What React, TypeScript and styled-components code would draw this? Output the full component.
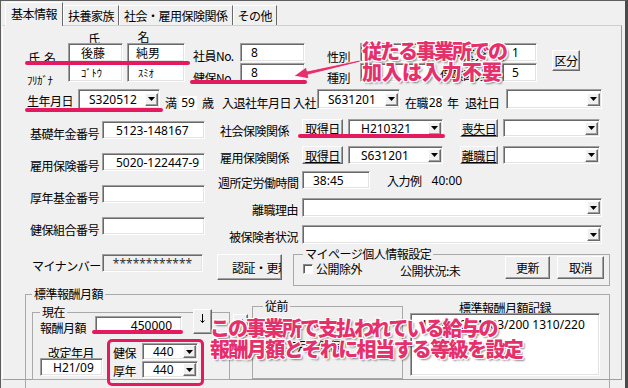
import React from "react";
import styled, { createGlobalStyle } from "styled-components";

const JP = `"Noto Sans CJK JP", "Noto Sans", sans-serif`;
const NUM = `"Noto Sans", "Noto Sans CJK JP", sans-serif`;
const PINK = "#e6306c";
const MARK = "#e31a5e";

const GlobalStyle = createGlobalStyle`
  body { margin: 0; background: #f0f0f0; }
  * { box-sizing: border-box; }
`;

const Window = styled.div`
  position: relative;
  width: 628px;
  height: 388px;
  overflow: hidden;
  background: #f0f0f0;
  border-top: 1px solid #5e5e5e;
  border-left: 1px solid #5e5e5e;
  border-right: 3px solid #4a4a4a;
  font-family: ${JP};
  font-size: 12px;
  color: #000;
`;

const TabStrip = styled.div`
  display: flex;
  align-items: flex-end;
  height: 24px;
  padding-left: 4px;
`;

const Tab = styled.div<{ $active?: boolean }>`
  position: relative;
  z-index: ${(p) => (p.$active ? 1 : 0)};
  display: flex;
  align-items: center;
  height: ${(p) => (p.$active ? 24 : 20)}px;
  margin-bottom: ${(p) => (p.$active ? -1 : 0)}px;
  padding: 0 ${(p) => (p.$active ? 5 : 4)}px ${(p) => (p.$active ? 3 : 0)}px;
  background: #f0f0f0;
  border-top: 1px solid #fff;
  border-left: 1px solid #fff;
  border-right: 1px solid #6a6a6a;
  letter-spacing: -0.5px;
  white-space: nowrap;
`;

const Panel = styled.div`
  margin-left: 1px;
  width: 620px;
  height: 355px;
  border: 1px solid;
  border-color: #cfcfcf #9d9d9d #9d9d9d #fff;
`;

/* ---------- generic form parts ---------- */

const FormRow = styled.div<{ $h: number; $mt?: number }>`
  display: flex;
  align-items: flex-start;
  flex-shrink: 0;
  height: ${(p) => p.$h}px;
  margin-top: ${(p) => p.$mt ?? 0}px;
`;

const Label = styled.span<{
  $w?: number;
  $ml?: number;
  $mt?: number;
  $pl?: number;
  $pr?: number;
  $align?: "left" | "right" | "center";
  $fs?: number;
  $num?: boolean;
}>`
  display: block;
  flex-shrink: 0;
  width: ${(p) => (p.$w ? `${p.$w}px` : "auto")};
  margin-left: ${(p) => p.$ml ?? 0}px;
  margin-top: ${(p) => p.$mt ?? 0}px;
  padding-left: ${(p) => p.$pl ?? 0}px;
  padding-right: ${(p) => p.$pr ?? 0}px;
  text-align: ${(p) => p.$align ?? "left"};
  font-family: ${(p) => (p.$num ? NUM : JP)};
  font-size: ${(p) => p.$fs ?? 12}px;
  line-height: 14px;
  letter-spacing: ${(p) => (p.$num ? 0 : -0.5)}px;
  white-space: nowrap;
`;

const Box = styled.div<{
  $w: number;
  $h?: number;
  $ml?: number;
  $mt?: number;
  $pl?: number;
  $pr?: number;
  $justify?: string;
  $gray?: boolean;
  $small?: boolean;
}>`
  flex-shrink: 0;
  display: flex;
  align-items: center;
  justify-content: ${(p) => p.$justify ?? "flex-start"};
  width: ${(p) => p.$w}px;
  height: ${(p) => p.$h ?? 19}px;
  margin-left: ${(p) => p.$ml ?? 0}px;
  margin-top: ${(p) => p.$mt ?? 0}px;
  padding-left: ${(p) => p.$pl ?? 10}px;
  padding-right: ${(p) => p.$pr ?? 0}px;
  background: ${(p) => (p.$gray ? "#f0f0f0" : "#fff")};
  border: 1px solid;
  border-color: #a0a0a0 #fff #fff #a0a0a0;
  box-shadow: inset 1px 1px 0 #696969, inset -1px -1px 0 #e3e3e3;
  font-family: ${NUM};
  font-size: ${(p) => (p.$small ? 10.5 : 12)}px;
  color: ${(p) => (p.$gray ? "#333" : "#000")};
  white-space: nowrap;
  overflow: hidden;
`;

const ComboText = styled.span`
  flex: 1;
`;

const DropBtn = styled.span`
  flex-shrink: 0;
  display: flex;
  align-items: center;
  justify-content: center;
  width: 13px;
  height: 13px;
  margin-right: 1px;
  background: #f0f0f0;
  border: 1px solid;
  border-color: #fff #696969 #696969 #fff;
  box-shadow: inset -1px -1px 0 #a0a0a0;
`;

type ComboProps = { w: number; h?: number; ml?: number; mt?: number; pl?: number; value?: string };

function Combo({ w, h, ml, mt, pl, value }: ComboProps) {
  return (
    <Box $w={w} $h={h} $ml={ml} $mt={mt} $pl={pl}>
      <ComboText>{value}</ComboText>
      <DropBtn>
        <svg width="7" height="4" viewBox="0 0 7 4">
          <polygon points="0,0 7,0 3.5,4" fill="#000" />
        </svg>
      </DropBtn>
    </Box>
  );
}

const Tag = styled.span<{ $w: number; $mt?: number }>`
  flex-shrink: 0;
  width: ${(p) => p.$w}px;
  height: 14px;
  margin-top: ${(p) => p.$mt ?? 0}px;
  background: #fff;
  font-family: ${NUM};
  font-size: 12px;
  line-height: 14px;
  text-align: center;
`;

const Button = styled.button<{
  $w: number;
  $h: number;
  $ml?: number;
  $mt?: number;
  $pl?: number;
  $link?: boolean;
  $top?: boolean;
}>`
  flex-shrink: 0;
  display: flex;
  align-items: ${(p) => (p.$top ? "flex-start" : "center")};
  justify-content: ${(p) => (p.$pl ? "flex-start" : "center")};
  width: ${(p) => p.$w}px;
  height: ${(p) => p.$h}px;
  margin: ${(p) => p.$mt ?? 0}px 0 0 ${(p) => p.$ml ?? 0}px;
  padding: ${(p) => (p.$top ? 4 : 0)}px 0 0 ${(p) => p.$pl ?? 0}px;
  background: #f0f0f0;
  border: 1px solid;
  border-color: #fff #696969 #696969 #fff;
  box-shadow: inset -1px -1px 0 #a0a0a0;
  font-family: ${JP};
  font-size: 12px;
  letter-spacing: -0.5px;
  color: #000;
  text-decoration: ${(p) => (p.$link ? "underline" : "none")};
  white-space: nowrap;
  overflow: hidden;
`;

const Check = styled.span`
  flex-shrink: 0;
  width: 10px;
  height: 10px;
  margin-top: 8px;
  background: #fff;
  border: 1px solid;
  border-color: #8a8a8a #fff #fff #8a8a8a;
  box-shadow: inset 1px 1px 0 #5a5a5a;
`;

const Group = styled.fieldset<{ $w: number; $h: number; $ml?: number; $mt?: number; $pl?: number }>`
  flex-shrink: 0;
  min-width: 0;
  width: ${(p) => p.$w}px;
  height: ${(p) => p.$h}px;
  margin: ${(p) => p.$mt ?? 0}px 0 0 ${(p) => p.$ml ?? 0}px;
  padding: 0 0 0 ${(p) => p.$pl ?? 0}px;
  border: 1px solid #a9a9a9;
`;

const Legend = styled.legend`
  margin: 0;
  padding: 0 2px;
  font-size: 12px;
  line-height: 14px;
  letter-spacing: -0.5px;
`;

/* ---------- sections ---------- */

const TopBlock = styled.div`
  display: flex;
  align-items: flex-start;
  margin-top: 5px;
  padding-left: 24px;
`;

const NameRows = styled.div`
  display: flex;
  flex-direction: column;
  row-gap: 1px;
`;

const Section = styled.div<{ $mt: number; $pl?: number }>`
  display: flex;
  align-items: flex-start;
  margin-top: ${(p) => p.$mt}px;
  padding-left: ${(p) => p.$pl ?? 24}px;
`;

const Column = styled.div<{ $w: number; $gap?: number; $pt?: number; $ml?: number }>`
  display: flex;
  flex-direction: column;
  flex-shrink: 0;
  width: ${(p) => p.$w}px;
  row-gap: ${(p) => p.$gap ?? 0}px;
  padding-top: ${(p) => p.$pt ?? 0}px;
  margin-left: ${(p) => p.$ml ?? 0}px;
`;

const RecordBox = styled.div`
  width: 190px;
  height: 63px;
  margin-top: -2px;
  padding: 4px 0 0 10px;
  background: #fff;
  border: 1px solid;
  border-color: #a0a0a0 #fff #fff #a0a0a0;
  box-shadow: inset 1px 1px 0 #696969, inset -1px -1px 0 #e3e3e3;
  font-family: ${NUM};
  font-size: 12px;
  line-height: 14px;
  white-space: nowrap;
`;

/* ---------- annotations (drawn over the form) ---------- */

const Underline = styled.div<{ $x: number; $y: number; $w: number }>`
  position: absolute;
  left: ${(p) => p.$x - 1}px;
  top: ${(p) => p.$y - 1}px;
  width: ${(p) => p.$w}px;
  height: 4px;
  border-radius: 2px;
  background: ${MARK};
`;

const Frame = styled.div`
  position: absolute;
  left: 106px;
  top: 338px;
  width: 97px;
  height: 47px;
  border: 3px solid ${MARK};
  border-radius: 5px;
`;

const Callout = styled.div<{ $x: number; $y: number }>`
  position: absolute;
  left: ${(p) => p.$x - 1}px;
  top: ${(p) => p.$y - 1}px;
  display: flex;
  flex-direction: column;
  font-family: ${JP};
  font-weight: 900;
  font-size: 20px;
  line-height: 21px;
  color: ${PINK};
  white-space: nowrap;
  text-shadow: -1px -1px 0 #fff, 1px -1px 0 #fff, -1px 1px 0 #fff, 1px 1px 0 #fff,
    0 -1px 0 #fff, 0 1px 0 #fff, -1px 0 0 #fff, 1px 0 0 #fff, 2px 2px 2px rgba(0, 0, 0, 0.45);
`;

const CalloutLine = styled.span<{ $ls: number }>`
  letter-spacing: ${(p) => p.$ls}px;
`;

const Arrow = styled.svg`
  position: absolute;
  left: 287px;
  top: 51px;
`;

type InsRowProps = { label: string; btn1: string; value: string; btn2: string; mt?: number };

function InsuranceRow({ label, btn1, value, btn2, mt }: InsRowProps) {
  return (
    <FormRow $h={18} $mt={mt}>
      <Label $w={84} $pl={2} $mt={5}>{label}</Label>
      <Button $w={41} $h={18} $link>{btn1}</Button>
      <Combo w={95} h={18} ml={5} pl={12} value={value} />
      <Button $w={38} $h={18} $ml={17} $link>{btn2}</Button>
      <Combo w={97} h={18} ml={5} />
    </FormRow>
  );
}

export default function App() {
  return (
    <>
      <GlobalStyle />
      <Window>
        <TabStrip>
          <Tab $active>基本情報</Tab>
          <Tab>扶養家族</Tab>
          <Tab>社会・雇用保険関係</Tab>
          <Tab>その他</Tab>
        </TabStrip>
        <Panel>
          <TopBlock>
            <NameRows>
              <FormRow $h={11}>
                <Label $ml={61} $mt={1}>氏</Label>
                <Label $ml={38} $mt={-1}>名</Label>
              </FormRow>
              <FormRow $h={19}>
                <Label $w={41} $pl={1} $mt={8}>氏{"\u00a0\u00a0"}名</Label>
                <Box $w={55} $pl={12}>後藤</Box>
                <Box $w={58} $ml={4} $pl={8}>純男</Box>
                <Label $w={47} $ml={8} $mt={6}>社員No.</Label>
                <Box $w={65}>8</Box>
                <Label $w={33} $ml={22} $mt={7}>性別</Label>
                <Box $w={70} />
                <Label $w={62} $ml={10} $mt={5}>加入区分</Label>
                <Box $w={35} $pl={9}>1</Box>
              </FormRow>
              <FormRow $h={19}>
                <Label $w={41} $mt={10} $fs={11}>ﾌﾘｶﾞﾅ</Label>
                <Box $w={55} $pl={12} $small>ｺﾞﾄｳ</Box>
                <Box $w={58} $ml={4} $pl={10} $small>ｽﾐｵ</Box>
                <Label $w={47} $ml={8} $mt={8}>健保No.</Label>
                <Box $w={65}>8</Box>
                <Label $w={33} $ml={22} $mt={8}>種別</Label>
                <Box $w={70} />
                <Label $w={62} $ml={10} $mt={5}>保険区分</Label>
                <Box $w={35} $pl={9}>5</Box>
              </FormRow>
            </NameRows>
            <Button $w={28} $h={21} $ml={15} $mt={19}>区分</Button>
          </TopBlock>

          <Section $mt={7}>
            <Label $w={51} $mt={5}>生年月日</Label>
            <Combo w={82} h={20} pl={10} value="S320512" />
            <Label $w={14} $ml={5} $mt={7}>満</Label>
            <Tag $w={18} $mt={7}>59</Tag>
            <Label $w={20} $ml={5} $mt={7}>歳</Label>
            <Label $w={71} $mt={7}>入退社年月日</Label>
            <Label $w={24} $mt={7}>入社</Label>
            <Combo w={83} h={20} pl={10} value="S631201" />
            <Label $w={23} $ml={5} $mt={7}>在職</Label>
            <Tag $w={15} $mt={7}>28</Tag>
            <Label $w={18} $ml={4} $mt={7}>年</Label>
            <Label $w={41} $mt={7}>退社日</Label>
            <Combo w={96} h={20} />
          </Section>

          <Section $mt={9}>
            <Column $w={191} $gap={14} $pt={2}>
              {[
                ["基礎年金番号", "5123-148167"],
                ["雇用保険番号", "5020-122447-9"],
                ["厚年基金番号", ""],
                ["健保組合番号", ""],
              ].map(([label, value]) => (
                <FormRow $h={18} key={label}>
                  <Label $w={75} $pl={3} $mt={6}>{label}</Label>
                  <Box $w={103} $h={18} $pl={13}>{value}</Box>
                </FormRow>
              ))}
            </Column>
            <Column $w={384}>
              <InsuranceRow label="社会保険関係" btn1="取得日" value="H210321" btn2="喪失日" />
              <InsuranceRow label="雇用保険関係" btn1="取得日" value="S631201" btn2="離職日" mt={9} />
              <FormRow $h={18} $mt={7}>
                <Label $w={84} $pr={4} $mt={5} $align="right">週所定労働時間</Label>
                <Box $w={68} $h={18}>38:45</Box>
                <Label $ml={17} $mt={3}>入力例</Label>
                <Label $ml={10} $mt={3} $num>40:00</Label>
              </FormRow>
              <FormRow $h={18} $mt={9}>
                <Label $w={84} $pr={4} $mt={5} $align="right">離職理由</Label>
                <Combo w={300} h={19} />
              </FormRow>
              <FormRow $h={18} $mt={9}>
                <Label $w={84} $pr={4} $mt={5} $align="right">被保険者状況</Label>
                <Combo w={300} h={19} />
              </FormRow>
            </Column>
          </Section>

          <Section $mt={4}>
            <Label $w={75} $pl={5} $mt={12}>マイナンバー</Label>
            <Box $w={101} $h={18} $mt={7} $pl={0} $justify="center" $gray>
              ************
            </Box>
            <Button $w={65} $h={26} $ml={14} $mt={7} $pl={14}>認証・更新</Button>
            <Group $w={317} $h={39} $ml={11} $pl={9}>
              <Legend>マイページ個人情報設定</Legend>
              <FormRow $h={23} $mt={-5}>
                <Check />
                <Label $w={84} $ml={3} $mt={6}>公開除外</Label>
                <Label $w={105} $mt={8}>公開状況:未</Label>
                <Button $w={45} $h={23}>更新</Button>
                <Button $w={47} $h={23} $ml={7}>取消</Button>
              </FormRow>
            </Group>
          </Section>

          <Section $mt={1} $pl={22}>
            <Group $w={585} $h={120} $pl={6}>
              <Legend>標準報酬月額</Legend>
              <FormRow $h={80}>
                <Group $w={198} $h={75} $mt={4} $pl={7}>
                  <Legend>現在</Legend>
                  <FormRow $h={25} $mt={-10}>
                    <Label $w={55} $mt={12}>報酬月額</Label>
                    <Box $w={87} $h={18} $mt={7} $pl={0} $pr={9} $justify="flex-end">450000</Box>
                    <Button $w={19} $h={25} $ml={11} $top>
                      <svg width="5" height="9" viewBox="0 0 5 9">
                        <path d="M2.5 0 V8.5 M0.5 6.5 L2.5 8.5 L4.5 6.5" stroke="#000" strokeWidth="1" fill="none" />
                      </svg>
                    </Button>
                  </FormRow>
                  <FormRow $h={36} $mt={9}>
                    <Column $w={68}>
                      <Label $pl={8} $mt={3}>改定年月</Label>
                      <Box $w={63} $h={18} $mt={-2} $pl={12}>H21/09</Box>
                    </Column>
                    <Column $w={85} $gap={1}>
                      <FormRow $h={17}>
                        <Label $w={29} $ml={5} $mt={3}>健保</Label>
                        <Combo w={56} h={17} pl={10} value="440" />
                      </FormRow>
                      <FormRow $h={17}>
                        <Label $w={29} $ml={5} $mt={3}>厚年</Label>
                        <Combo w={56} h={17} pl={10} value="440" />
                      </FormRow>
                    </Column>
                  </FormRow>
                </Group>
                <Button $w={15} $h={22} $ml={3} $mt={13} $top>
                  <svg width="9" height="5" viewBox="0 0 9 5">
                    <path d="M0 2.5 H8.5 M6.5 0.5 L8.5 2.5 L6.5 4.5" stroke="#000" strokeWidth="1" fill="none" />
                  </svg>
                </Button>
                <Group $w={151} $h={80} $ml={4} $mt={-2} $pl={10}>
                  <Legend>従前</Legend>
                  <FormRow $h={20} $mt={26}>
                    <Label $w={55}>改定年月</Label>
                    <Label $w={30}>健保</Label>
                  </FormRow>
                </Group>
                <Column $w={190} $ml={7}>
                  <Label $align="center">標準報酬月額記録</Label>
                  <RecordBox>1310/190 1303/200 1310/220</RecordBox>
                </Column>
              </FormRow>
            </Group>
          </Section>
        </Panel>

        <Underline $x={25} $y={61} $w={165} />
        <Underline $x={190} $y={80} $w={117} />
        <Underline $x={25} $y={108} $w={138} />
        <Underline $x={298} $y={134} $w={147} />
        <Underline $x={92} $y={330} $w={91} />
        <Frame />

        <Arrow width="80" height="32" viewBox="0 0 80 32">
          <polygon
            points="6,24 18.3,15 19.2,19 71.8,8 72.2,10 20.1,22.9 21,26.8"
            fill={PINK}
            stroke="#fff"
            strokeWidth="0.8"
            strokeLinejoin="round"
          />
        </Arrow>
        <Callout $x={362} $y={40}>
          <CalloutLine $ls={-2}>従たる事業所での</CalloutLine>
          <CalloutLine $ls={0}>加入は入力不要</CalloutLine>
        </Callout>
        <Callout $x={210} $y={317}>
          <CalloutLine $ls={-2}>この事業所で支払われている給与の</CalloutLine>
          <CalloutLine $ls={-1.6}>報酬月額とそれに相当する等級を設定</CalloutLine>
        </Callout>
      </Window>
    </>
  );
}
